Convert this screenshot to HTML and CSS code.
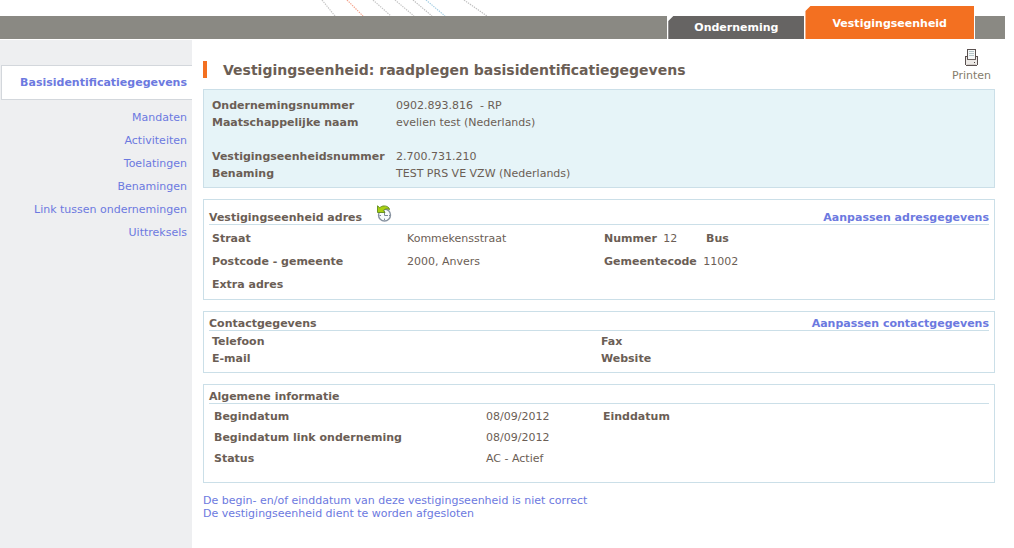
FILE: index.html
```html
<!DOCTYPE html>
<html lang="nl">
<head>
<meta charset="utf-8">
<title>Vestigingseenheid</title>
<link rel="stylesheet" href="styles.css">
</head>
<body>
<header class="banner">
  <svg class="rays" width="200" height="16" viewBox="0 0 200 16" fill="none" stroke-dasharray="1.4 1" stroke-width="1.2">
    <path d="M2 0L15 16" stroke="#c6c6c6"/>
    <path d="M27 0L43 16" stroke="#f5a58e"/>
    <path d="M53 0L71 16" stroke="#c6c6c6"/>
    <path d="M75 0L94 16" stroke="#c6c6c6"/>
    <path d="M93 0L112 16" stroke="#c0c0c0"/>
    <path d="M106 0L125 16" stroke="#a6cfe4"/>
    <path d="M144 0L167 16" stroke="#c0c0c0"/>
  </svg>
  <nav class="tabs">
    <span class="bar bar-wide"></span>
    <a class="tab" href="#onderneming">Onderneming</a>
    <a class="tab tab-active" href="#vestiging">Vestigingseenheid</a>
    <span class="bar bar-end"></span>
  </nav>
</header>
<div class="page">
  <nav class="side">
    <a class="side-link side-active" href="#basis">Basisidentificatiegegevens</a>
    <a class="side-link" href="#mandaten">Mandaten</a>
    <a class="side-link" href="#activiteiten">Activiteiten</a>
    <a class="side-link" href="#toelatingen">Toelatingen</a>
    <a class="side-link" href="#benamingen">Benamingen</a>
    <a class="side-link" href="#link">Link tussen ondernemingen</a>
    <a class="side-link" href="#uittreksels">Uittreksels</a>
  </nav>
  <main class="content">
    <div class="title-row">
      <h1 class="title">Vestigingseenheid: raadplegen basisidentificatiegegevens</h1>
      <a class="print" href="#print">
        <svg width="13" height="17" viewBox="0 0 13 17" shape-rendering="crispEdges">
          <path d="M2 0h9v10H2z" fill="#5a5150"/>
          <path d="M3 1h7v9H3z" fill="#f5f7f7"/>
          <path d="M4 2h5v1H4zM4 4h5v1H4zM4 6h5v1H4z" fill="#b4c5c8"/>
          <path d="M0 7h2v3h9V7h2v9h-1v1H1v-1H0z" fill="#5a5150"/>
          <path d="M1 8h1v3h9V8h1v8H1z" fill="#ece9e6"/>
          <path d="M2 10h9v1H2z" fill="#6b6260"/>
          <path d="M9 13h1v1H9z" fill="#4c4442"/>
          <path d="M2 15h9v1H2z" fill="#d2cdc8"/>
        </svg>
        Printen
      </a>
    </div>

    <section class="box summary">
      <table class="grid rows-17">
        <tr><th class="c-184" scope="row">Ondernemingsnummer</th><td>0902.893.816 &nbsp;- RP</td></tr>
        <tr><th scope="row">Maatschappelijke naam</th><td>evelien test (Nederlands)</td></tr>
        <tr><td colspan="2"></td></tr>
        <tr><th scope="row">Vestigingseenheidsnummer</th><td>2.700.731.210</td></tr>
        <tr><th scope="row">Benaming</th><td>TEST PRS VE VZW (Nederlands)</td></tr>
      </table>
    </section>

    <section class="box address">
      <div class="head head-tall">
        <h2 class="head-title">Vestigingseenheid adres</h2>
        <svg class="history" width="15" height="17" viewBox="0 0 15 17">
          <circle cx="7.5" cy="10" r="6" fill="#f8fafc" stroke="#8792a0" stroke-width="1.4"/>
          <path d="M7.500 5.500v5H11M7.500 13.500v1.500M2.500 10.500H4M12 10.500h1" stroke="#7d8a98" fill="none"/>
          <path d="M.5 .8L2.800 2.800C5 .3 9.500 .2 12 3L12.500 4.500C10 3.200 8 3.800 6.300 5.500L8 7.500H.5z" fill="#a9d010" stroke="#5f8a1c" stroke-width=".9"/>
        </svg>
        <a class="head-link" href="#adres">Aanpassen adresgegevens</a>
      </div>
      <table class="grid rows-23">
        <tr><th class="c-195" scope="row">Straat</th><td class="c-197">Kommekensstraat</td><td class="c-102"><b class="label">Nummer</b> 12</td><td><b class="label">Bus</b></td></tr>
        <tr><th scope="row">Postcode - gemeente</th><td>2000, Anvers</td><td colspan="2"><b class="label">Gemeentecode</b> 11002</td></tr>
        <tr><th scope="row">Extra adres</th><td colspan="3"></td></tr>
      </table>
    </section>

    <section class="box contact">
      <div class="head">
        <h2 class="head-title">Contactgegevens</h2>
        <a class="head-link" href="#contact">Aanpassen contactgegevens</a>
      </div>
      <table class="grid rows-17">
        <tr><th class="c-389" scope="row">Telefoon</th><th scope="row">Fax</th></tr>
        <tr><th scope="row">E-mail</th><th scope="row">Website</th></tr>
      </table>
    </section>

    <section class="box general">
      <div class="head">
        <h2 class="head-title">Algemene informatie</h2>
      </div>
      <table class="grid rows-21">
        <tr><th class="c-272" scope="row">Begindatum</th><td class="c-117">08/09/2012</td><th scope="row">Einddatum</th></tr>
        <tr><th scope="row">Begindatum link onderneming</th><td>08/09/2012</td><td></td></tr>
        <tr><th scope="row">Status</th><td>AC - Actief</td><td></td></tr>
      </table>
    </section>

    <div class="actions">
      <a href="#correct">De begin- en/of einddatum van deze vestigingseenheid is niet correct</a>
      <a href="#afsluiten">De vestigingseenheid dient te worden afgesloten</a>
    </div>
  </main>
</div>
</body>
</html>
```
FILE: styles.css
```css
* { box-sizing: border-box; }

body {
  margin: 0;
  min-height: 100vh;
  display: flex;
  flex-direction: column;
  background: #fff;
  color: #6b5e55;
  font: 11px/13px Verdana, "DejaVu Sans", sans-serif;
}

a { color: #6c79e0; text-decoration: none; }

.banner { position: relative; padding: 6px 9px 0 0; }
.rays { position: absolute; top: 0; left: 320px; }

.tabs { display: flex; align-items: flex-end; gap: 1px; }
.bar { height: 23px; background: #8a8983; }
.bar-wide { flex: 1; }
.bar-end { width: 30px; }
.tab {
  height: 23px;
  padding: 0 26px;
  background: #666463;
  color: #fff;
  font-weight: bold;
  line-height: 24px;
  clip-path: polygon(5px 0, 100% 0, 100% 100%, 0 100%, 0 5px);
}
.tab-active { height: 33px; padding: 0 27px; background: #f37021; line-height: 35px; }

.page { flex: 1; display: flex; padding-top: 1px; }

.side {
  width: 192px;
  flex: none;
  display: flex;
  flex-direction: column;
  padding: 25px 0 0 1px;
  background: #eeeff1;
  text-align: right;
}
.side-link { padding-right: 5px; line-height: 23px; }
.side-active {
  margin-bottom: 6px;
  border: 1px solid #d3d7dc;
  border-right: 0;
  background: #fff;
  font-weight: bold;
  line-height: 33px;
}

.content { flex: 1; padding: 9px 19px 20px 11px; }

.title-row {
  display: flex;
  justify-content: space-between;
  align-items: flex-start;
  height: 40px;
}
.title {
  margin: 12px 0 0;
  padding: 1px 0 0 16px;
  border-left: 4px solid #f37021;
  font-size: 14px;
  line-height: 16px;
}
.print {
  display: flex;
  flex-direction: column;
  align-items: center;
  gap: 3px;
  margin-right: 4px;
  color: #857c6c;
}

.box { margin-bottom: 11px; border: 1px solid #cbdfe8; padding: 0 5px; }
.summary { padding: 7px 8px 5px; background: #e6f4f8; }
.address { padding-bottom: 3px; }
.contact { padding-bottom: 5px; }
.general { padding-bottom: 13px; }

.head {
  display: flex;
  align-items: flex-end;
  height: 19px;
  border-bottom: 1px solid #cbdfe8;
}
.head-tall { height: 25px; }
.head-title { margin: 0; font-size: 11px; line-height: 13px; }
.history { margin: 0 0 2px 15px; }
.head-link { margin-left: auto; font-weight: bold; }

.grid { width: 100%; border-collapse: collapse; table-layout: fixed; }
.grid th, .grid td { padding: 0; text-align: left; white-space: nowrap; }
.address .grid, .contact .grid { margin: 2px 0 0 3px; }
.general .grid { margin: 2px 0 0 5px; }
.label { margin-right: 3px; }
.rows-17 tr { height: 17px; }
.rows-21 tr { height: 21px; }
.rows-23 tr { height: 23px; }
.c-102 { width: 102px; }
.c-117 { width: 117px; }
.c-184 { width: 184px; }
.c-195 { width: 195px; }
.c-197 { width: 197px; }
.c-272 { width: 272px; }
.c-389 { width: 389px; }

.actions { display: flex; flex-direction: column; align-items: flex-start; }
```
